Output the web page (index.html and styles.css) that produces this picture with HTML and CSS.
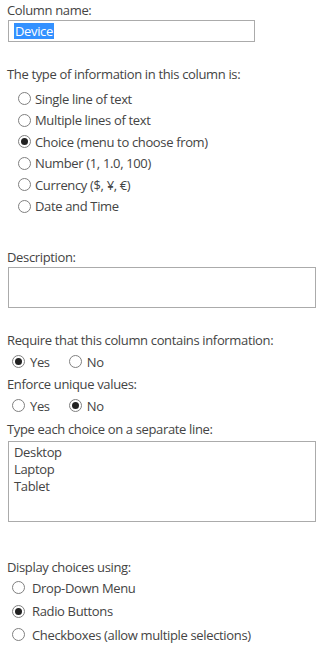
FILE: index.html
```html
<!DOCTYPE html>
<html lang="en">
<head>
  <meta charset="UTF-8">
  <meta name="viewport" content="width=device-width, initial-scale=1.0">
  <title>Column settings</title>
  <link rel="stylesheet" href="styles.css">
</head>
<body>
  <form class="column-form">
    <!-- column name -->
    <div class="label">Column name:</div>
    <div class="text-box"><span class="selected">Device</span></div>

    <!-- type of information -->
    <div class="label label-type">The type of information in this column is:</div>
    <div class="type-list">
      <label class="option"><input type="radio" name="type"> Single line of text</label>
      <label class="option"><input type="radio" name="type"> Multiple lines of text</label>
      <label class="option"><input type="radio" name="type" checked> Choice (menu to choose from)</label>
      <label class="option"><input type="radio" name="type"> Number (1, 1.0, 100)</label>
      <label class="option"><input type="radio" name="type"> Currency ($, ¥, €)</label>
      <label class="option"><input type="radio" name="type"> Date and Time</label>
    </div>

    <!-- description -->
    <div class="label label-desc">Description:</div>
    <textarea class="area area-desc"></textarea>

    <div class="label label-require">Require that this column contains information:</div>
    <div class="yes-no">
      <label class="pair"><input type="radio" name="required" checked> Yes</label>
      <label class="pair"><input type="radio" name="required"> No</label>
    </div>

    <div class="label">Enforce unique values:</div>
    <div class="yes-no">
      <label class="pair"><input type="radio" name="unique"> Yes</label>
      <label class="pair"><input type="radio" name="unique" checked> No</label>
    </div>

    <div class="label label-choices">Type each choice on a separate line:</div>
    <textarea class="area area-choices">Desktop
Laptop
Tablet</textarea>

    <div class="label label-display">Display choices using:</div>
    <div class="display-list">
      <label class="option"><input type="radio" name="display"> Drop-Down Menu</label>
      <label class="option"><input type="radio" name="display" checked> Radio Buttons</label>
      <label class="option"><input type="radio" name="display"> Checkboxes (allow multiple selections)</label>
    </div>
  </form>
</body>
</html>
```

FILE: styles.css
```css
*,
*::before,
*::after {
  box-sizing: border-box;
}
body {
  margin: 0;
  font-family: "Open Sans", "Noto Sans", sans-serif;
  font-size: 13px;
  letter-spacing: -0.35px;
  color: #444;
  background-color: #fff;
}

.column-form {
  padding: 2px 0 0 7px;
}

/* field labels */
.label {
  line-height: 17px;
  height: 17px;
}
.label-type {
  margin-top: 24px;
}
.label-desc {
  margin-top: 32px;
}
.label-require {
  margin-top: 24px;
}
.label-choices {
  margin-top: 5px;
}
.label-display {
  margin-top: 37px;
}

/* single line box with the selected value */
.text-box {
  margin: 1px 0 0 1px;
  width: 247px;
  height: 22px;
  border: 1px solid #ababab;
  padding: 2px 0 0 5px;
  line-height: 16px;
}
.selected {
  display: inline-block;
  background-color: #3391ff;
  color: #fff;
  padding: 0 1px;
}

/* multi line boxes */
.area {
  display: block;
  margin: 0 0 0 1px;
  width: 308px;
  border: 1px solid #ababab;
  font: inherit;
  color: inherit;
  letter-spacing: inherit;
  line-height: 17px;
  padding: 2px 5px;
  resize: none;
  outline: none;
}
.area-desc {
  margin-top: 1px;
  height: 41px;
}
.area-choices {
  margin-top: 3px;
  height: 81px;
}

/* radio buttons */
input[type="radio"] {
  appearance: none;
  -webkit-appearance: none;
  margin: 0;
  flex: none;
  width: 13px;
  height: 13px;
  border: 1px solid #808080;
  border-radius: 50%;
  background-color: #fff;
  display: flex;
  align-items: center;
  justify-content: center;
}
input[type="radio"]:checked::after {
  content: "";
  width: 7px;
  height: 7px;
  border-radius: 50%;
  background-color: #222;
}

.option {
  display: flex;
  align-items: center;
}
.type-list {
  margin-top: 5px;
  padding-left: 11px;
}
.type-list .option {
  height: 21.5px;
  gap: 4px;
}

.yes-no {
  display: flex;
  height: 21px;
  margin: 2px 0 4px;
  padding-left: 5px;
}
.pair {
  display: flex;
  align-items: center;
  gap: 5px;
  margin-right: 19px;
}

.display-list {
  margin-top: 0;
  padding-left: 5px;
}
.display-list .option {
  height: 23.5px;
  gap: 7px;
}
```
